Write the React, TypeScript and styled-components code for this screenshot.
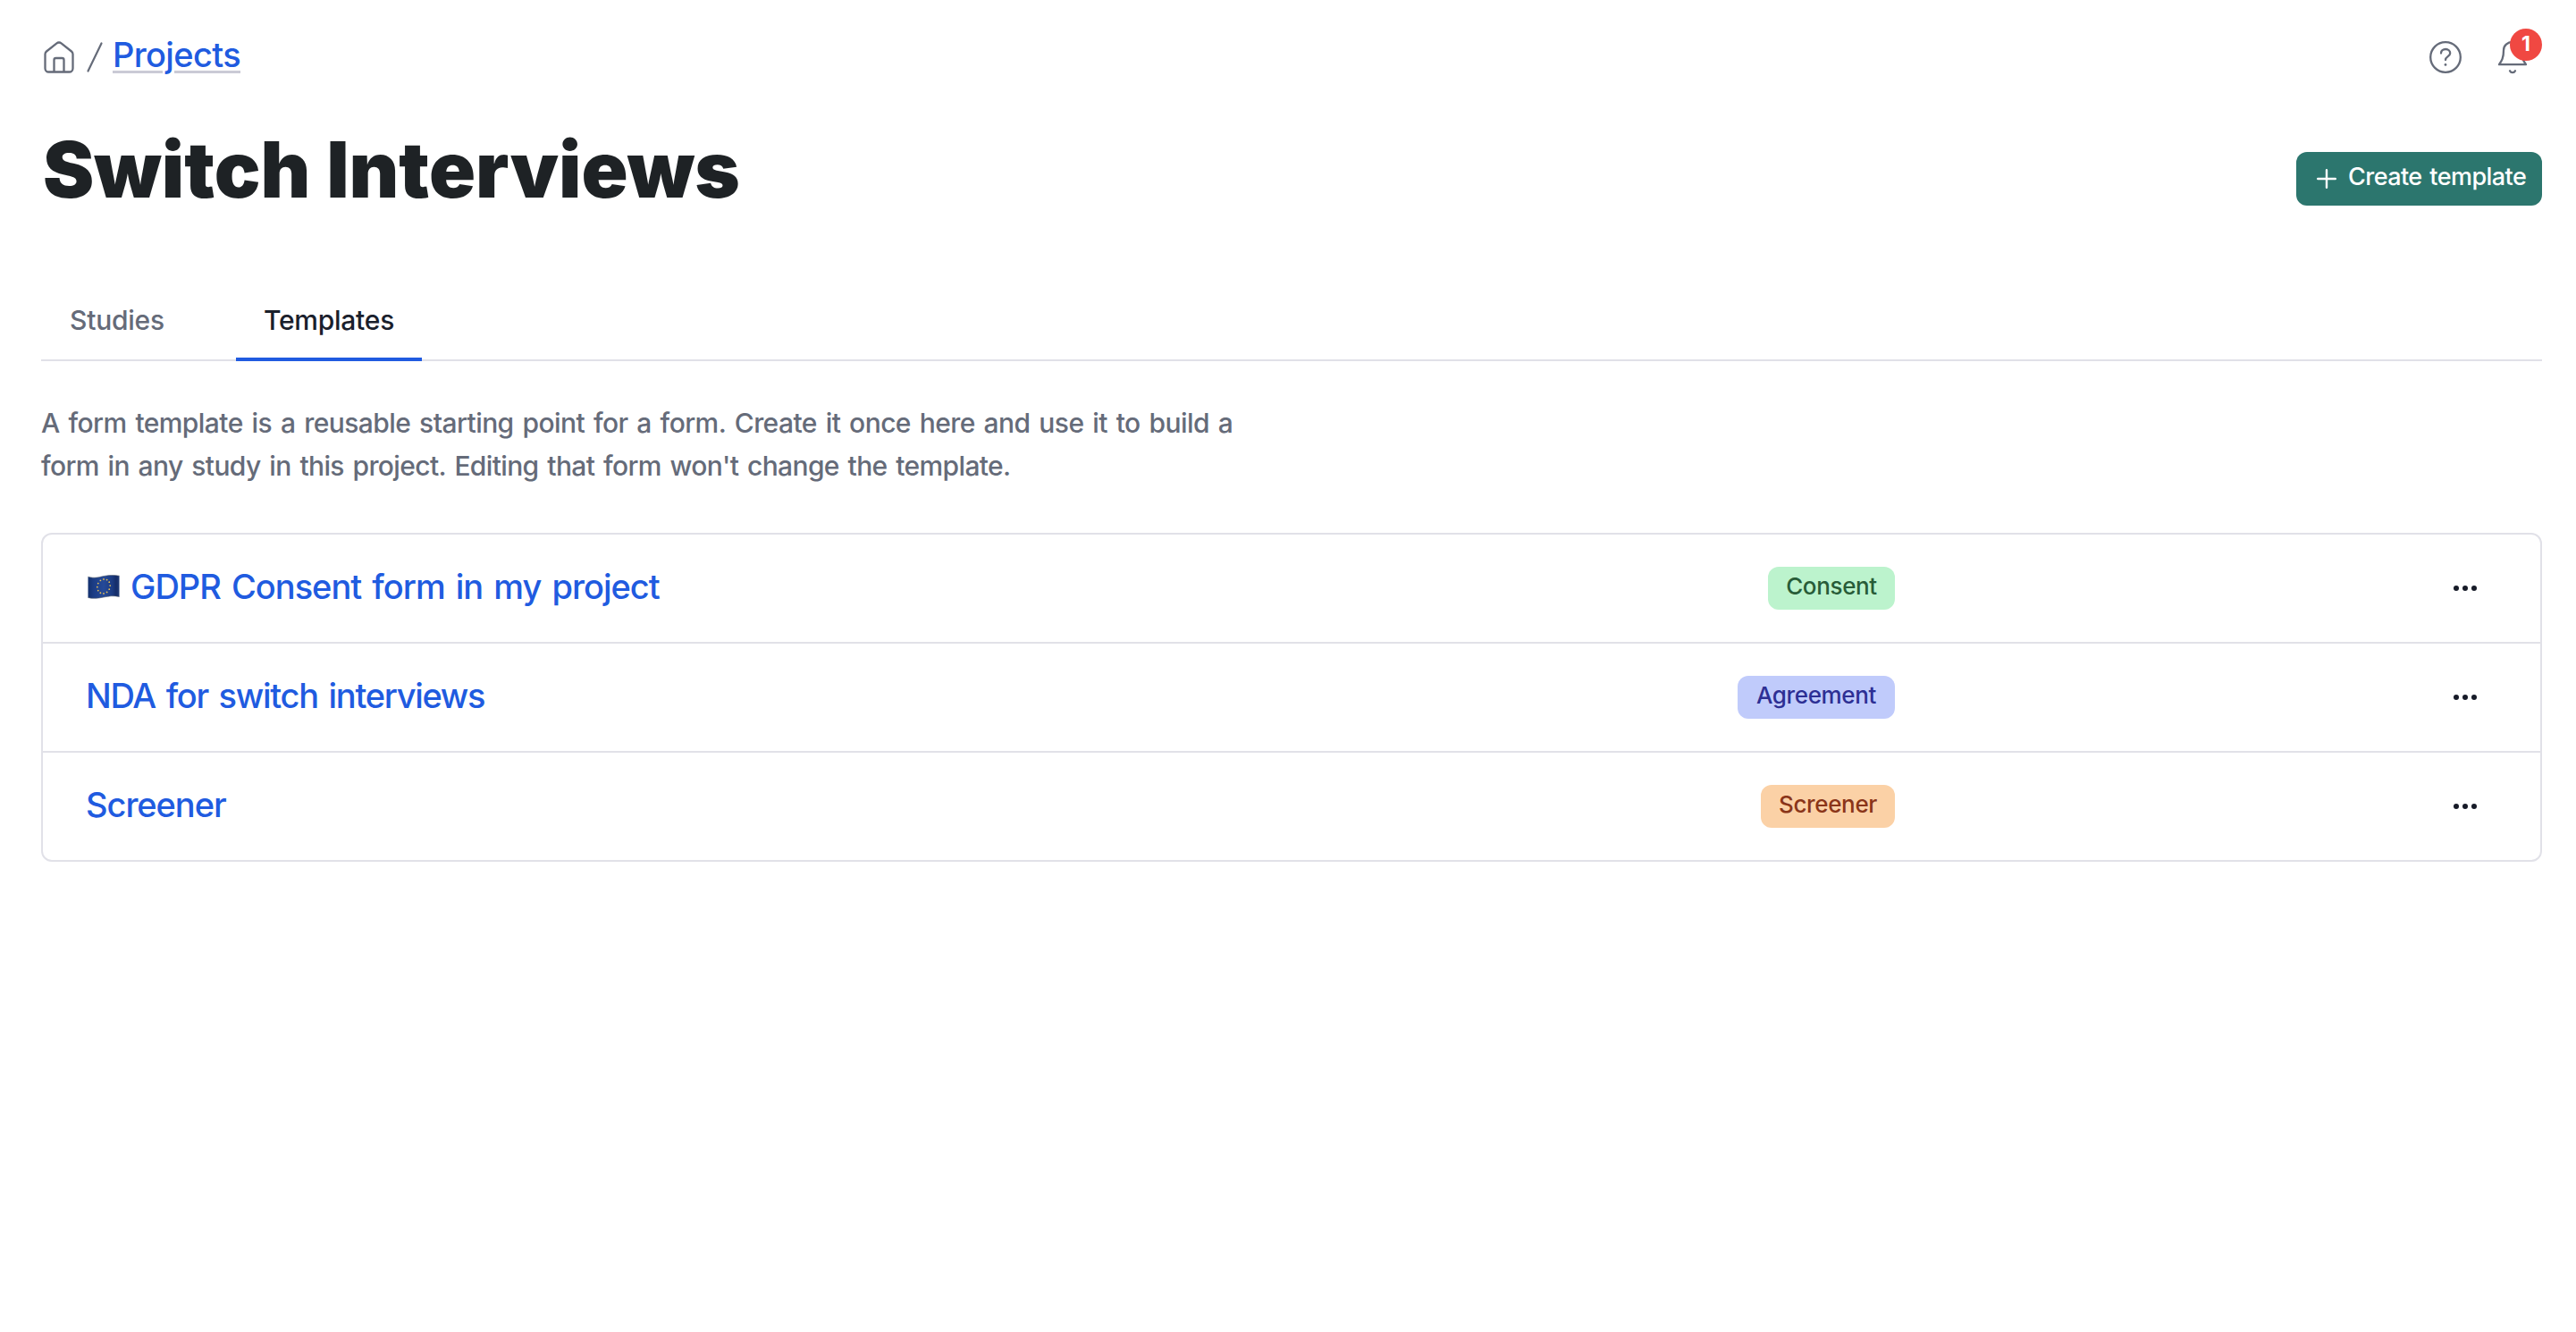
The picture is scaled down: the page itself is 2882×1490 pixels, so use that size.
import React from 'react';
import styled, { createGlobalStyle } from 'styled-components';

const GlobalStyle = createGlobalStyle`
  *, *::before, *::after { box-sizing: border-box; }
  body {
    margin: 0;
    background: #ffffff;
    color: #1f2428;
    font-family: Inter, "Liberation Sans", sans-serif;
    font-weight: 450;
  }
  h1, p, ul { margin: 0; padding: 0; }
  ul { list-style: none; }
  button { border: 0; padding: 0; background: none; font: inherit; color: inherit; }
`;

const Page = styled.div`
  min-height: 1490px;
  padding: 0 38px 0 46px;
`;

const TopBar = styled.nav`
  display: flex;
  align-items: center;
  justify-content: space-between;
  height: 128px;
  color: #656b79;
`;

const Breadcrumb = styled.div`
  display: flex;
  align-items: center;
  svg { display: block; }
`;

const ProjectsLink = styled.a`
  margin-left: 10px;
  padding-bottom: 6px;
  color: #205be0;
  font-size: 38px;
  line-height: 48px;
  font-weight: 500;
  letter-spacing: -0.65px;
  text-decoration: underline;
  text-decoration-color: #cacad6;
  text-decoration-thickness: 3px;
  text-underline-offset: 4px;
`;

const Actions = styled.div`
  display: flex;
  align-items: center;
  gap: 40px;
  svg { display: block; }
`;

const BellButton = styled.button`
  position: relative;
  width: 50px;
  height: 40px;
`;

const Count = styled.span`
  position: absolute;
  top: -12px;
  right: 0;
  width: 36px;
  height: 36px;
  border-radius: 50%;
  background: #f04842;
  color: #ffffff;
  font-size: 23px;
  line-height: 34px;
  font-weight: 700;
  text-align: center;
`;

const Header = styled.header`
  display: flex;
  align-items: flex-start;
  justify-content: space-between;
  height: 182px;
`;

const Title = styled.h1`
  padding-left: 2px;
  font-size: 86px;
  line-height: 124px;
  font-weight: 900;
  letter-spacing: 0;
  word-spacing: 1px;
  color: #1e2225;
`;

const CreateButton = styled.button`
  display: flex;
  align-items: center;
  width: 275px;
  height: 60px;
  margin-top: 42px;
  padding-left: 23px;
  border-radius: 12px;
  background: #2c766e;
  color: #ffffff;
`;

const CreateLabel = styled.span`
  margin-left: 13px;
  padding-bottom: 4px;
  font-size: 27px;
  line-height: 36px;
  font-weight: 500;
  letter-spacing: -0.55px;
  word-spacing: 2px;
  white-space: nowrap;
`;

const Tabs = styled.div`
  display: flex;
  gap: 48px;
  height: 94px;
  box-shadow: inset 0 -2px #e1e1e8;
`;

const Tab = styled.div<{ $active?: boolean; $width: number }>`
  width: ${(p) => p.$width}px;
  padding-top: 3px;
  border-bottom: 4px solid ${(p) => (p.$active ? '#205be0' : 'transparent')};
  color: ${(p) => (p.$active ? '#1a202c' : '#656b79')};
  font-size: 30px;
  line-height: 90px;
  letter-spacing: -0.25px;
  text-align: center;
`;

const Description = styled.p`
  margin-top: 45px;
  color: #656b79;
  font-size: 30px;
  line-height: 48px;
  word-spacing: 2.4px;
`;

const DescriptionLine = styled.span<{ $tracking: number }>`
  display: block;
  letter-spacing: ${(p) => p.$tracking}px;
`;

const List = styled.ul`
  margin-top: 51px;
  border: 2px solid #e1e1e8;
  border-radius: 12px;
`;

const Row = styled.li`
  display: flex;
  align-items: center;
  height: 120px;
  padding: 0 48px;
  & + & {
    height: 122px;
    border-top: 2px solid #e1e1e8;
  }
`;

const RowTitle = styled.a<{ $tracking: number }>`
  display: flex;
  align-items: center;
  flex: 1;
  padding-bottom: 5px;
  color: #205be0;
  font-size: 38px;
  line-height: 48px;
  letter-spacing: ${(p) => p.$tracking}px;
  word-spacing: 3px;
  svg { display: block; margin: 2px 12px 0 2px; }
`;

type Kind = 'consent' | 'agreement' | 'screener';

const badgeStyle: Record<Kind, { bg: string; fg: string; width: number }> = {
  consent: { bg: '#bcf3cd', fg: '#285c38', width: 142 },
  agreement: { bg: '#c0cbfb', fg: '#2d2f94', width: 176 },
  screener: { bg: '#fbd1a6', fg: '#8a3519', width: 150 },
};

const Badge = styled.span<{ $kind: Kind }>`
  width: ${(p) => badgeStyle[p.$kind].width}px;
  height: 48px;
  border-radius: 12px;
  background: ${(p) => badgeStyle[p.$kind].bg};
  color: ${(p) => badgeStyle[p.$kind].fg};
  font-size: 26px;
  line-height: 44px;
  letter-spacing: -0.35px;
  text-align: center;
`;

const MenuButton = styled.button`
  display: flex;
  align-items: center;
  justify-content: center;
  gap: 4px;
  width: 72px;
  height: 48px;
  margin-left: 602px;
`;

const Dot = styled.i`
  width: 6px;
  height: 6px;
  border-radius: 50%;
  background: #171b28;
`;

const HomeIcon = () => (
  <svg width="38" height="36" viewBox="46 45 38 36" fill="none" stroke="currentColor" strokeWidth="2.3" strokeLinejoin="round">
    <path d="M50.5 59.5a4 4 0 0 1 1.5-3L63.2 47.6a4.4 4.4 0 0 1 5.6 0L80 56.500a4 4 0 0 1 1.500 3V75.500a4 4 0 0 1-4 4h-23a4 4 0 0 1-4-4Z" />
    <path d="M60.500 79V66a2 2 0 0 1 2-2h7a2 2 0 0 1 2 2v13" />
  </svg>
);

const Slash = () => (
  <svg width="32" height="34" viewBox="84 47 32 34" fill="none" stroke="currentColor" strokeWidth="2.200" strokeLinecap="round">
    <path d="M113.500 48.500 98.500 79.500" />
  </svg>
);

const HelpIcon = () => (
  <svg width="36" height="36" viewBox="0 0 36 36" fill="none" stroke="currentColor" strokeWidth="2.300" strokeLinecap="round">
    <circle cx="18" cy="18" r="16.800" />
    <path d="M13 13.500c0-2.700 2.300-4.500 5.200-4.500 2.800 0 5 1.900 5 4.600 0 3.600-5.200 3.600-5.200 7.400" />
    <circle cx="18" cy="26.400" r="1.400" fill="currentColor" stroke="none" />
  </svg>
);

const BellIcon = () => (
  <svg width="34" height="40" viewBox="2795 44 34 40" fill="none" stroke="currentColor" strokeWidth="2.300" strokeLinecap="round" strokeLinejoin="round">
    <path d="M2812 47c-5.600 0-10 3.900-10 9.200 0 9-2.200 12-5 16h30c-2.800-4-5-7-5-16 0-5.300-4.400-9.200-10-9.200Z" />
    <path d="M2809 79.200c1.300 2.600 4.700 2.600 6 0" />
  </svg>
);

const PlusIcon = () => (
  <svg width="22" height="22" viewBox="0 0 22 22" fill="none" stroke="currentColor" strokeWidth="2.400" strokeLinecap="round">
    <path d="M11 1.200v19.600M1.200 11h19.600" />
  </svg>
);

const stars = Array.from({ length: 12 }, (_, i) => {
  const a = (i * Math.PI) / 6;
  return { x: 18 + 7.2 * Math.sin(a), y: 12.9 - 8 * Math.cos(a) - 0.8 * Math.sin(a) };
});

const EuFlag = () => (
  <svg width="36" height="27" viewBox="0 0 36 27">
    <defs>
      <linearGradient id="cloth" x1="0" x2="1">
        <stop offset="0" stopColor="#12306e" />
        <stop offset="0.18" stopColor="#1c3d85" />
        <stop offset="0.5" stopColor="#254a98" />
        <stop offset="0.78" stopColor="#1b3a80" />
        <stop offset="0.9" stopColor="#142c69" />
        <stop offset="1" stopColor="#213c78" />
      </linearGradient>
    </defs>
    <path d="M.5 2.200C8 4.200 12 2.800 18 1.500S30 0 35.500 1.200V24.500C29 23 24 23.800 18 25S6 27 .5 25.500Z" fill="url(#cloth)" />
    <path d="M.5 2.200C8 4.200 12 2.800 18 1.500S30 0 35.500 1.200M35.500 24.500C29 23 24 23.800 18 25S6 27 .5 25.500" fill="none" stroke="#4a5568" strokeOpacity="0.6" />
    {stars.map((s, i) => (
      <circle key={i} cx={s.x} cy={s.y} r="0.9" fill="#e3bd55" />
    ))}
  </svg>
);

interface Template {
  title: string;
  tracking: number;
  kind: Kind;
  label: string;
  flag?: boolean;
}

const templates: Template[] = [
  { title: 'GDPR Consent form in my project', tracking: -1, kind: 'consent', label: 'Consent', flag: true },
  { title: 'NDA for switch interviews', tracking: -1.3, kind: 'agreement', label: 'Agreement' },
  { title: 'Screener', tracking: -1.05, kind: 'screener', label: 'Screener' },
];

export default function App() {
  return (
    <Page>
      <GlobalStyle />
      <TopBar>
        <Breadcrumb>
          <HomeIcon />
          <Slash />
          <ProjectsLink>Projects</ProjectsLink>
        </Breadcrumb>
        <Actions>
          <HelpIcon />
          <BellButton>
            <BellIcon />
            <Count>1</Count>
          </BellButton>
        </Actions>
      </TopBar>
      <Header>
        <Title>Switch Interviews</Title>
        <CreateButton>
          <PlusIcon />
          <CreateLabel>Create template</CreateLabel>
        </CreateButton>
      </Header>
      <Tabs>
        <Tab $width={170}>Studies</Tab>
        <Tab $width={208} $active>Templates</Tab>
      </Tabs>
      <Description>
        <DescriptionLine $tracking={-0.57}>
          A form template is a reusable starting point for a form. Create it once here and use it to build a
        </DescriptionLine>
        <DescriptionLine $tracking={-0.64}>
          form in any study in this project. Editing that form won't change the template.
        </DescriptionLine>
      </Description>
      <List>
        {templates.map((t) => (
          <Row key={t.title}>
            <RowTitle $tracking={t.tracking}>
              {t.flag && <EuFlag />}
              {t.title}
            </RowTitle>
            <Badge $kind={t.kind}>{t.label}</Badge>
            <MenuButton>
              <Dot />
              <Dot />
              <Dot />
            </MenuButton>
          </Row>
        ))}
      </List>
    </Page>
  );
}
